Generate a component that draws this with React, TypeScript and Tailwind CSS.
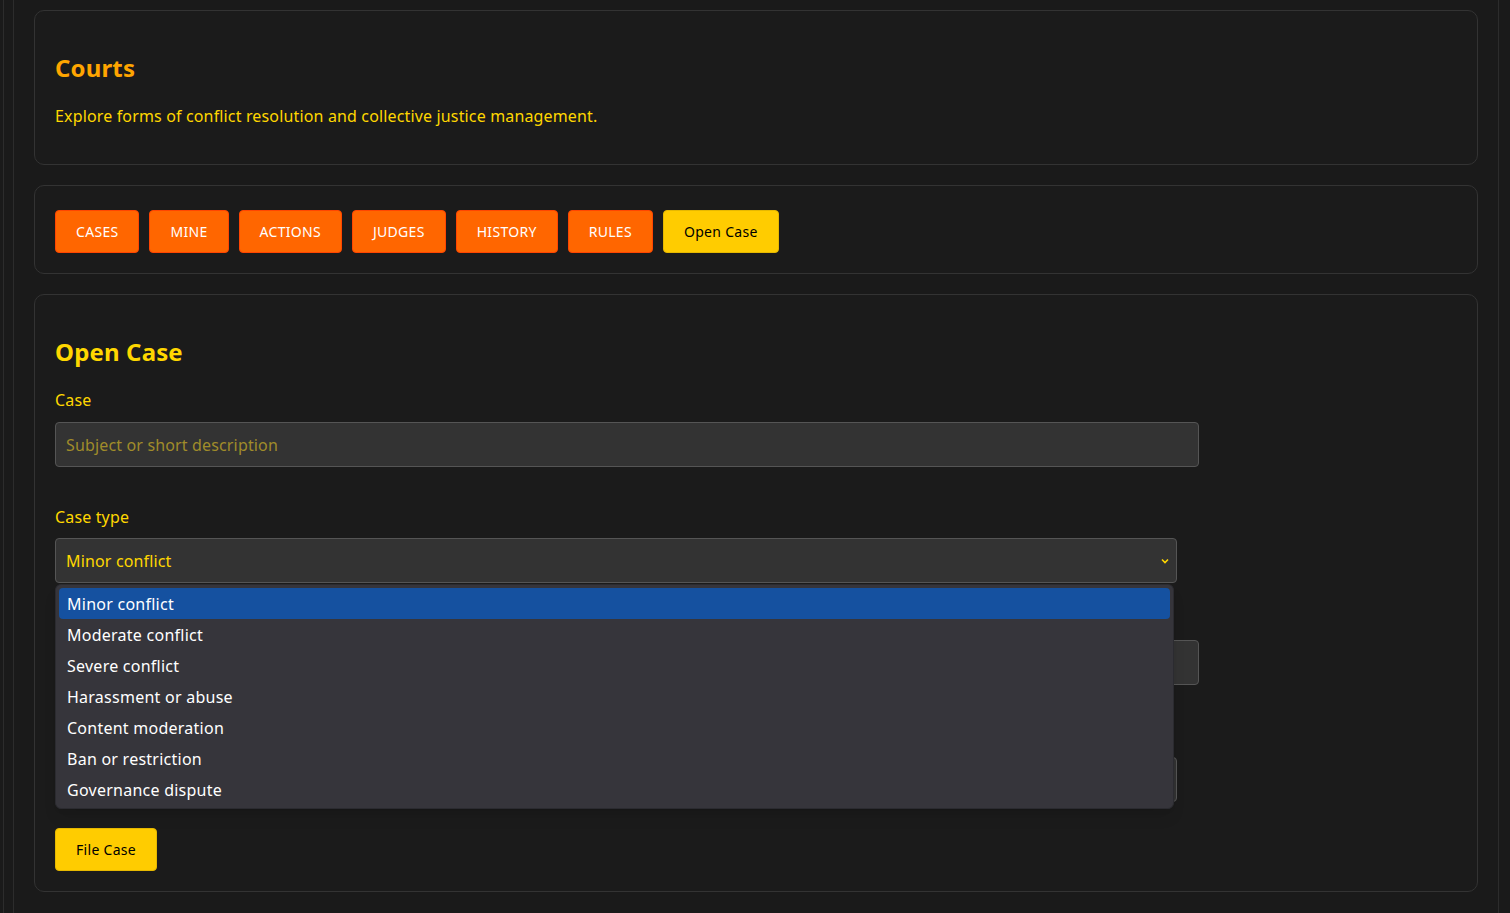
import React, { useState } from 'react'

const tabs = ['CASES', 'MINE', 'ACTIONS', 'JUDGES', 'HISTORY', 'RULES']

const caseTypes = [
  'Minor conflict',
  'Moderate conflict',
  'Severe conflict',
  'Harassment or abuse',
  'Content moderation',
  'Ban or restriction',
  'Governance dispute',
]

const Chevron = () => (
  <svg width="10" height="10" viewBox="0 0 10 10" className="shrink-0">
    <path d="M2 3.5 L5 6.5 L8 3.5" fill="none" stroke="#ffd700" strokeWidth="1.6" />
  </svg>
)

const Card: React.FC<{ className?: string; children: React.ReactNode }> = ({ className, children }) => (
  <div className={`rounded-[10px] border border-[#333333] bg-[#1b1b1b] px-5 ${className || ''}`}>{children}</div>
)

const App = () => {
  const [caseType] = useState(caseTypes[0])

  return (
    <div className="min-h-screen bg-[#1a1a1a] font-['Noto_Sans',sans-serif] tracking-[0.15px]">
      <div className="ml-[3px] min-h-screen border-l border-[#2c2c2c]">
        <div className="ml-[9px] mr-[11px] min-h-screen border-x border-[#2c2c2c] px-[20px] py-[10px]">
          <Card className="py-5">
            <h2 className="my-5 text-2xl leading-[33px] font-bold text-[#ffa500]">Courts</h2>
            <p className="my-4 text-base text-[#ffd700]">
              Explore forms of conflict resolution and collective justice management.
            </p>
          </Card>

          <Card className="mt-[20px] pb-5 pt-6">
            <div className="flex gap-[10px]">
              {tabs.map((t) => (
                <button
                  key={t}
                  className="h-[43px] rounded border border-[#ff4500] bg-[#ff6600] px-5 text-sm tracking-[0.3px] text-white"
                >
                  {t}
                </button>
              ))}
              <button className="h-[43px] rounded border border-[#e6b800] bg-[#ffcc00] px-5 text-sm tracking-[0.3px] text-black">
                Open Case
              </button>
            </div>
          </Card>

          <Card className="mt-[20px] py-5">
            <h2 className="my-5 text-2xl leading-[33px] font-bold text-[#ffd700]">Open Case</h2>

            <label className="block text-base text-[#ffd700]">Case</label>
            <input
              className="mt-[10px] block h-[45px] w-[1144px] rounded border border-[#555555] bg-[#333333] px-[10px] text-base text-[#ffd700] outline-none placeholder:text-[#a08c2a]"
              placeholder="Subject or short description"
            />

            <label className="mt-[38px] block text-base text-[#ffd700]">Case type</label>
            <div className="relative mt-[9px] w-[1122px]">
              <div className="flex h-[45px] items-center justify-between rounded border border-[#555555] bg-[#333333] pl-[10px] pr-[6px] text-base text-[#ffd700]">
                <span>{caseType}</span>
                <Chevron />
              </div>
              <ul className="absolute left-0 top-[46px] z-10 w-[1119px] rounded-md border border-[#2b2b30] bg-[#36353b] p-[3px] shadow-lg">
                {caseTypes.map((c, i) => (
                  <li
                    key={c}
                    className={`flex h-[31px] items-center rounded px-2 text-base tracking-[0.25px] text-white ${
                      i === 0 ? 'bg-[#1551a0]' : ''
                    }`}
                  >
                    {c}
                  </li>
                ))}
              </ul>
            </div>

            <label className="mt-[24px] block text-base text-[#ffd700]">Description</label>
            <input
              className="mt-[9px] block h-[45px] w-[1144px] rounded border border-[#555555] bg-[#333333] px-[10px] text-base text-[#ffd700] outline-none"
            />

            <label className="mt-[39px] block text-base text-[#ffd700]">Court</label>
            <div className="mt-[9px] flex h-[45px] w-[1122px] items-center rounded border border-[#555555] bg-[#333333] px-[10px] text-base text-[#ffd700]">
              Community court
            </div>

            <button className="mt-[26px] h-[43px] rounded border border-[#e6b800] bg-[#ffcc00] px-5 text-sm tracking-[0.3px] text-black">
              File Case
            </button>
          </Card>
        </div>
      </div>
    </div>
  )
}

export default App
